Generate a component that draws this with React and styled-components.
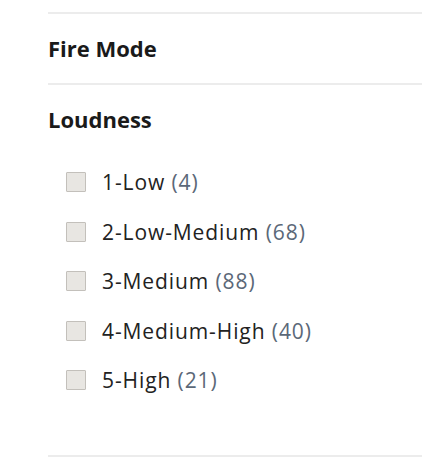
import React from 'react'
import styled, { createGlobalStyle } from 'styled-components'

const GlobalStyle = createGlobalStyle`
  body {
    margin: 0;
    background: #ffffff;
    font-family: 'Open Sans', 'Liberation Sans', sans-serif;
    color: #1e1e1e;
  }
`

const Panel = styled.div`
  width: 422px;
  height: 459px;
  padding: 12px 0 0 48px;
  box-sizing: border-box;
  overflow: hidden;
`

const Section = styled.section`
  border-top: 2px solid #ececec;
  padding: ${props => (props.$open ? '19px 0 63px' : '19px 0 20px')};
`

const Heading = styled.h3`
  margin: 0;
  font-size: 22px;
  font-weight: 700;
  line-height: 30px;
  color: #1a1a1a;
`

const List = styled.ul`
  list-style: none;
  margin: 36px 0 0;
  padding: 0 0 0 18px;
  display: flex;
  flex-direction: column;
  gap: 25.5px;
`

const Item = styled.li`
  display: flex;
  align-items: center;
  gap: 16px;
  height: 24px;
  font-size: 21px;
  letter-spacing: 0.9px;
  color: #222222;
`

const Box = styled.span`
  width: 18px;
  height: 18px;
  border: 1px solid #c3c0bb;
  background: #e8e6e2;
  border-radius: 1px;
  flex-shrink: 0;
`

const Count = styled.span`
  color: #5b6878;
`

const loudness = [
  { label: '1-Low', count: 4 },
  { label: '2-Low-Medium', count: 68 },
  { label: '3-Medium', count: 88 },
  { label: '4-Medium-High', count: 40 },
  { label: '5-High', count: 21 },
]

export default function App() {
  return (
    <>
      <GlobalStyle />
      <Panel>
        <Section>
          <Heading>Fire Mode</Heading>
        </Section>
        <Section $open>
          <Heading>Loudness</Heading>
          <List>
            {loudness.map(item => (
              <Item key={item.label}>
                <Box />
                <span>
                  {item.label} <Count>({item.count})</Count>
                </span>
              </Item>
            ))}
          </List>
        </Section>
        <Section />
      </Panel>
    </>
  )
}
